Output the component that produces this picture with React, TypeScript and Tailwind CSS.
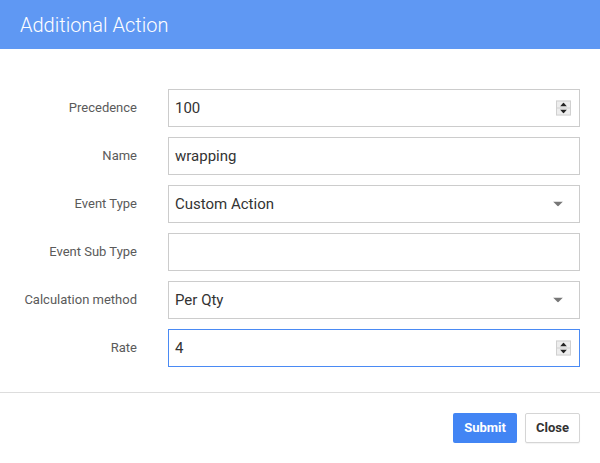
import React from "react";

function Spinner() {
  return (
    <div className="absolute right-[8px] top-1/2 -translate-y-1/2 flex h-[15px] w-[15px] flex-col border border-[#d0d0d0] bg-[#ededed]">
      <div className="flex flex-1 items-center justify-center border-b border-[#d0d0d0]">
        <svg width="7" height="4" viewBox="0 0 7 4"><path d="M0 4 L3.5 0 L7 4 Z" fill="#222" /></svg>
      </div>
      <div className="flex flex-1 items-center justify-center">
        <svg width="7" height="4" viewBox="0 0 7 4"><path d="M0 0 L3.5 4 L7 0 Z" fill="#222" /></svg>
      </div>
    </div>
  );
}

function Arrow() {
  return (
    <svg className="absolute right-[16px] top-1/2 -translate-y-1/2" width="10" height="5" viewBox="0 0 10 5">
      <path d="M0 0 L10 0 L5 5 Z" fill="#777" />
    </svg>
  );
}

type Row = { label: string; value: string; kind: "number" | "text" | "select"; focus?: boolean };

const rows: Row[] = [
  { label: "Precedence", value: "100", kind: "number" },
  { label: "Name", value: "wrapping", kind: "text" },
  { label: "Event Type", value: "Custom Action", kind: "select" },
  { label: "Event Sub Type", value: "", kind: "text" },
  { label: "Calculation method", value: "Per Qty", kind: "select" },
  { label: "Rate", value: "4", kind: "number", focus: true },
];

export default function App() {
  return (
    <div className="w-[600px] h-[463px] bg-white" style={{ fontFamily: "Roboto, 'Liberation Sans', sans-serif" }}>
      <div className="h-[49px] bg-[#5f98f3] flex items-center px-5">
        <span className="text-[20px] font-light text-white">Additional Action</span>
      </div>
      <div className="pt-[40px] flex flex-col gap-[10px]">
        {rows.map((r) => (
          <div key={r.label} className="flex items-center h-[38px]">
            <div className="w-[137px] text-right text-[13px] text-[#5a5a5a]">{r.label}</div>
            <div
              className={
                "relative ml-[31px] w-[412px] h-[38px] border bg-white flex items-center pl-[6px] text-[15px] text-[#333] " +
                (r.focus ? "border-[#4a8af4]" : "border-[#ccc]")
              }
            >
              {r.value}
              {r.kind === "number" && <Spinner />}
              {r.kind === "select" && <Arrow />}
            </div>
          </div>
        ))}
      </div>
      <div className="mt-[25px] border-t border-[#ddd]" />
      <div className="flex justify-end gap-[8px] pt-[20px] pr-[20px]">
        <button className="h-[30px] w-[64px] rounded-[2px] bg-[#4285f4] text-[13px] font-bold text-white">Submit</button>
        <button className="h-[30px] w-[55px] rounded-[2px] border border-[#d5d5d5] bg-white text-[13px] font-bold text-[#333] shadow-[0_1px_1px_rgba(0,0,0,0.05)]">Close</button>
      </div>
    </div>
  );
}
